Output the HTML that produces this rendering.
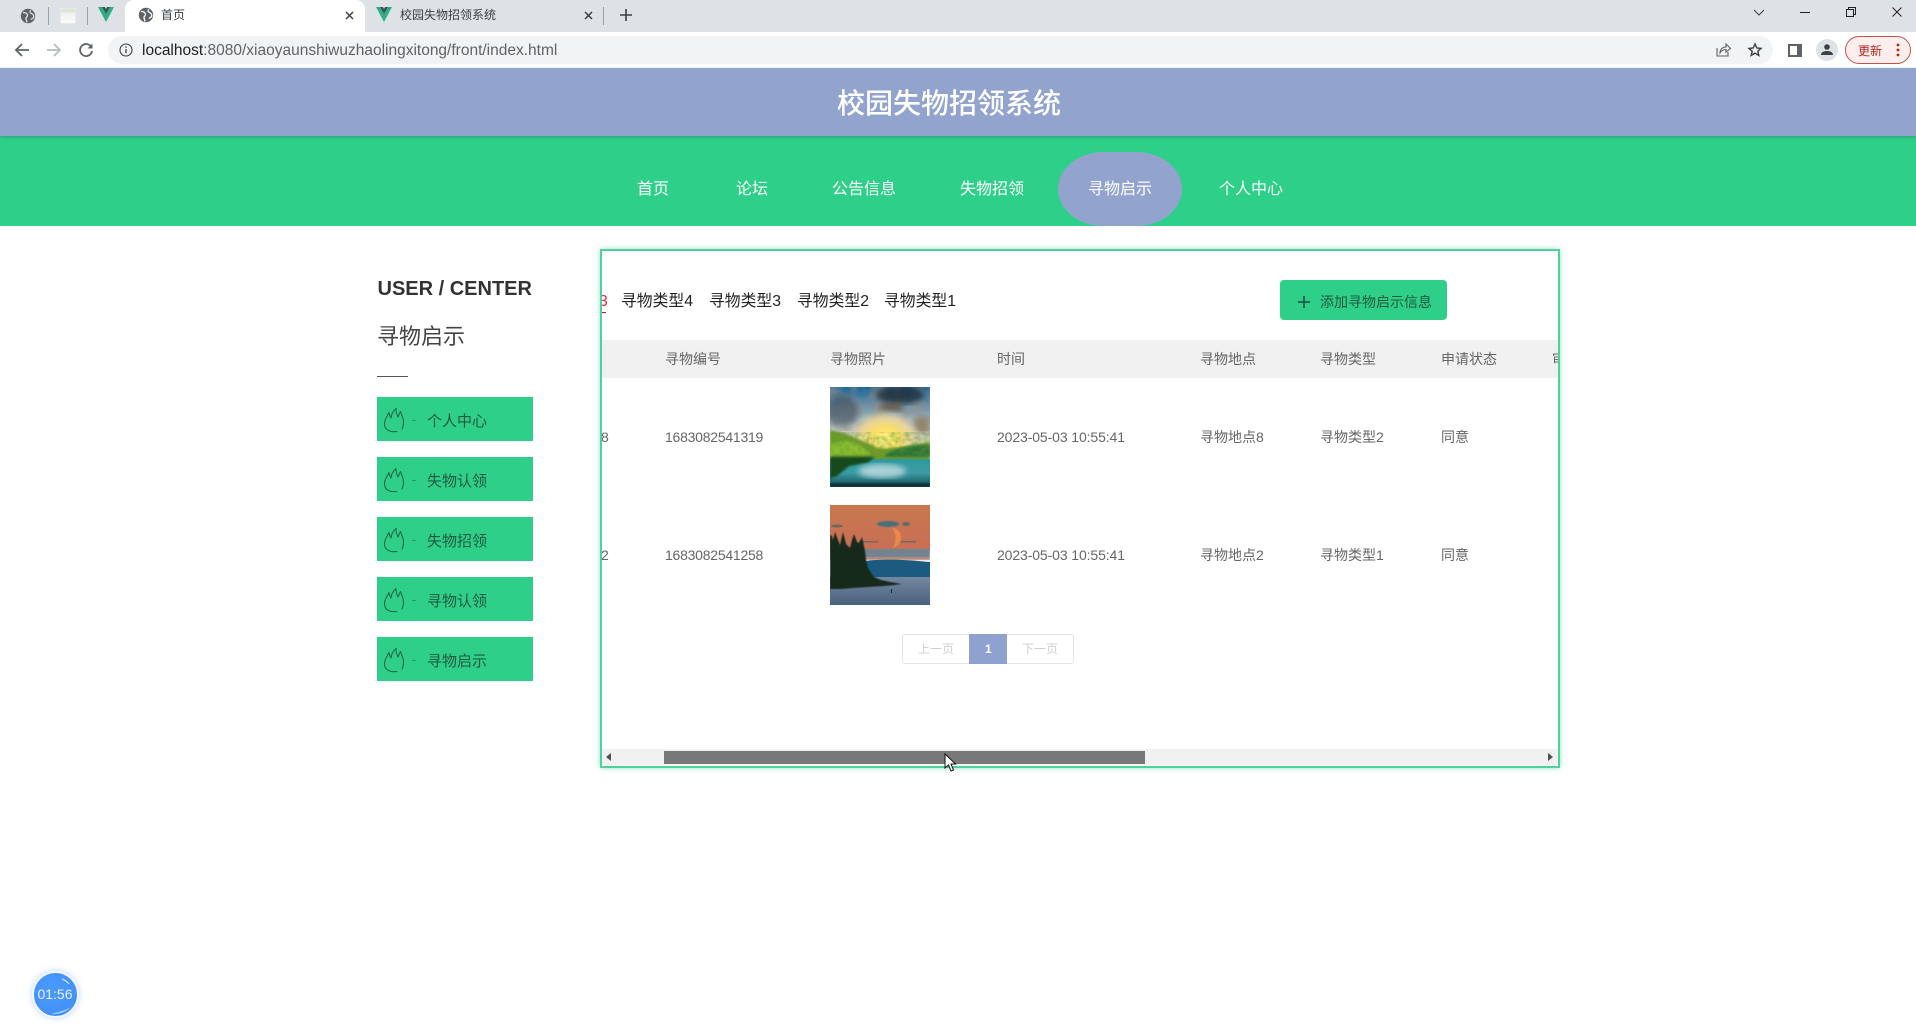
<!DOCTYPE html>
<html lang="zh"><head><meta charset="utf-8"><title>首页</title>
<style>
html,body{margin:0;padding:0;width:1916px;height:1034px;overflow:hidden;background:#fff}
body{position:relative;font-family:"Liberation Sans","Noto Sans CJK SC",sans-serif}
.a{position:absolute}
.t{position:absolute;white-space:nowrap;line-height:20px;height:20px}
svg{position:absolute;overflow:visible}
.nav{font-size:16px;color:#fff;top:180px}
.th{font-size:14px;color:#666;top:349px}
.td{font-size:14px;color:#666}
.n{letter-spacing:-.24px}
.dt{letter-spacing:-.11px}
.tab{font-size:15.8px;color:#222;top:292px}
.side{position:absolute;left:377px;width:156px;height:44px;background:#2ecf88}
.side span{position:absolute;white-space:nowrap;line-height:20px}
.side .d{left:35px;top:13px;font-size:13px;color:#2a8f60}
.side .l{left:50px;top:15px;font-size:15px;color:#1f5a40}
.side svg{left:7px;top:11px}
</style></head>
<body>
<!-- browser chrome -->
<div class="a" style="left:0;top:0;width:1916px;height:32px;background:#dee1e6"></div>
<div class="a" style="left:125px;top:0;width:240px;height:32px;background:#fff;border-radius:9px 9px 0 0"></div>
<div class="a" style="left:0;top:32px;width:1916px;height:36px;background:#fff"></div>
<div class="a" style="left:108px;top:36px;width:1665px;height:28px;background:#f1f3f4;border-radius:14px"></div>

<!-- pinned -->
<svg style="left:20px;top:8px" width="16" height="16" viewBox="0 0 16 16"><circle cx="8" cy="8" r="7.200" fill="#5f6368"/><path d="M3 4.500c2 0 4 .5 4.500 2.500S5.500 9 6 11c.3 1 .8 2 1 3.500M10.500 2.200c-.5 1.300-1 2.300.5 3s2.800 1.500 2.800 3.500-2.300 1.500-2.800 3" fill="none" stroke="#dee1e6" stroke-width="1.300"/></svg>
<div class="a" style="left:48px;top:7px;width:1px;height:18px;background:#9aa0a6"></div>
<div class="a" style="left:60px;top:8px;width:14px;height:14px;background:linear-gradient(#dbe5d8 0 25%,#eef0ee 25%,#fafafa);border:1px solid #e6e8ea"></div>
<div class="a" style="left:87px;top:7px;width:1px;height:18px;background:#9aa0a6"></div>
<svg style="left:98px;top:7px" width="16" height="15" viewBox="0 0 16 15"><path d="M0 0h4l4 7 4-7h4L8 15z" fill="#2fae82"/><path d="M4 0h3l1 2 1-2h3L8 7z" fill="#33535e"/></svg>

<!-- tab 1 -->
<svg style="left:138px;top:7px" width="16" height="16" viewBox="0 0 16 16"><circle cx="8" cy="8" r="7.200" fill="#5f6368"/><path d="M3 4.500c2 0 4 .5 4.500 2.500S5.500 9 6 11c.3 1 .8 2 1 3.500M10.500 2.200c-.5 1.300-1 2.300.5 3s2.800 1.500 2.800 3.500-2.300 1.500-2.800 3" fill="none" stroke="#fff" stroke-width="1.300"/></svg>
<div class="t" style="left:161px;top:5px;font-size:12px;color:#3c4043">首页</div>
<svg style="left:345px;top:11px" width="9" height="9" viewBox="0 0 9 9"><path d="M1 1l7 7M8 1L1 8" stroke="#3c4043" stroke-width="1.500"/></svg>
<!-- tab 2 -->
<svg style="left:376px;top:7px" width="16" height="15" viewBox="0 0 16 15"><path d="M0 0h4l4 7 4-7h4L8 15z" fill="#2fae82"/><path d="M4 0h3l1 2 1-2h3L8 7z" fill="#33535e"/></svg>
<div class="t" style="left:400px;top:5px;font-size:12px;color:#3c4043">校园失物招领系统</div>
<svg style="left:584px;top:11px" width="9" height="9" viewBox="0 0 9 9"><path d="M1 1l7 7M8 1L1 8" stroke="#3c4043" stroke-width="1.500"/></svg>
<div class="a" style="left:603px;top:7px;width:1px;height:18px;background:#9aa0a6"></div>
<svg style="left:620px;top:9px" width="12" height="12" viewBox="0 0 12 12"><path d="M6 0v12M0 6h12" stroke="#3c4043" stroke-width="1.600"/></svg>

<!-- toolbar -->
<svg style="left:14px;top:42px" width="16" height="16" viewBox="0 0 16 16"><path d="M15 8H2M8 2L2 8l6 6" fill="none" stroke="#5f6368" stroke-width="1.800"/></svg>
<svg style="left:46px;top:42px" width="16" height="16" viewBox="0 0 16 16"><path d="M1 8h13M8 2l6 6-6 6" fill="none" stroke="#b8bbbf" stroke-width="1.800"/></svg>
<svg style="left:78px;top:42px" width="16" height="16" viewBox="0 0 16 16"><path d="M13.500 5.500A6 6 0 1 0 14 9" fill="none" stroke="#5f6368" stroke-width="1.800"/><path d="M14.500 1.500v5h-5z" fill="#5f6368"/></svg>
<svg style="left:119px;top:43px" width="14" height="14" viewBox="0 0 14 14"><circle cx="7" cy="7" r="6" fill="none" stroke="#3c4043" stroke-width="1.100"/><path d="M7 6v4.200M7 3.400v1.400" stroke="#3c4043" stroke-width="1.300"/></svg>
<div class="t" style="left:142px;top:41px;font-size:15.500px;color:#5f6368"><span style="color:#202124">localhost</span>:8080/xiaoyaunshiwuzhaolingxitong/front/index.html</div>
<svg style="left:1716px;top:43px" width="15" height="14" viewBox="0 0 15 14"><path d="M1 5v8h11V9" fill="none" stroke="#5f6368" stroke-width="1.100"/><path d="M4 10c0-4 3-6 6-6V1l4.500 4.500L10 9V6.500C7.500 6.500 5.500 7.500 4 10z" fill="none" stroke="#5f6368" stroke-width="1.100"/></svg>
<svg style="left:1748px;top:43px" width="14" height="14" viewBox="0 0 14 14"><path d="M7 1l1.800 4 4.200.4-3.200 2.800 1 4.200L7 10.200 3.200 12.400l1-4.200L1 5.400 5.200 5z" fill="none" stroke="#3c4043" stroke-width="1.400"/></svg>
<div class="a" style="left:1788px;top:44px;width:14px;height:13px;background:#5f6368"></div>
<div class="a" style="left:1790px;top:46px;width:7px;height:9px;background:#fff"></div>
<div class="a" style="left:1816px;top:39px;width:22px;height:22px;border-radius:50%;background:#dee1e6"></div>
<svg style="left:1821px;top:44px" width="12" height="12" viewBox="0 0 12 12"><circle cx="6" cy="3" r="2.800" fill="#3c4043"/><path d="M0 11c0-3 3-4 6-4s6 1 6 4z" fill="#3c4043"/></svg>
<div class="a" style="left:1845px;top:36px;width:64px;height:26px;border:1px solid #c9504a;border-radius:14px;background:#fbeeed"></div>
<div class="t" style="left:1858px;top:41px;font-size:12px;color:#b3261e">更新</div>
<svg style="left:1896px;top:43px" width="4" height="14" viewBox="0 0 4 14"><circle cx="2" cy="2" r="1.400" fill="#b3261e"/><circle cx="2" cy="7" r="1.400" fill="#b3261e"/><circle cx="2" cy="12" r="1.400" fill="#b3261e"/></svg>
<!-- window controls -->
<svg style="left:1753px;top:9px" width="12" height="7" viewBox="0 0 12 7"><path d="M1 1l5 5 5-5" fill="none" stroke="#3c4043" stroke-width="1"/></svg>
<div class="a" style="left:1800px;top:12px;width:10px;height:1px;background:#202124"></div>
<svg style="left:1846px;top:7px" width="10" height="10" viewBox="0 0 10 10"><path d="M.5 2.500h7v7h-7zM2.500 2.500v-2h7v7h-2" fill="none" stroke="#202124" stroke-width="1"/></svg>
<svg style="left:1892px;top:7px" width="10" height="10" viewBox="0 0 10 10"><path d="M.5.500l9 9M9.500.500l-9 9" stroke="#202124" stroke-width="1"/></svg>

<!-- header -->
<div class="a" style="left:0;top:68px;width:1916px;height:68px;background:#92a4ce;box-shadow:0 1px 3px rgba(60,90,90,.45);z-index:2"></div>
<div class="t" style="left:837px;top:84px;height:40px;line-height:40px;font-size:28px;font-weight:500;color:#fff;z-index:3">校园失物招领系统</div>
<div class="a" style="left:0;top:136px;width:1916px;height:90px;background:#2ecf88"></div>
<div class="a" style="left:1058px;top:152px;width:124px;height:74px;background:#92a4ce;border-radius:45px/37px"></div>
<div class="t nav" style="left:637px">首页</div>
<div class="t nav" style="left:736px">论坛</div>
<div class="t nav" style="left:832px">公告信息</div>
<div class="t nav" style="left:960px">失物招领</div>
<div class="t nav" style="left:1088px">寻物启示</div>
<div class="t nav" style="left:1219px">个人中心</div>

<!-- sidebar -->
<div class="t" style="left:377.500px;top:279px;font-size:20px;font-weight:bold;color:#333">USER / CENTER</div>
<div class="t" style="left:377px;top:322px;height:30px;line-height:30px;font-size:22px;color:#444">寻物启示</div>
<div class="a" style="left:377px;top:376px;width:31px;height:1px;background:#555"></div>

<svg width="0" height="0" style="left:0;top:0"><defs><g id="fire" fill="none" stroke="#1f6a4a" stroke-width="1.100" stroke-linecap="round" stroke-linejoin="round"><path d="M13 23.500C6 24.500 .5 22 .5 15.500.5 11.500 3 9 5 4.500c.5 2.500 1 4 2 5.500C7.500 6 9 3 12 .5c-.5 3.500 1 6 2 8.500"/><path d="M14.500 8c.5-1.500 1-3 2-4.500 1 3.500 3 6.500 3 10.500 0 3-.5 5-1.500 7"/></g></defs></svg>

<div class="side" style="top:397px"><svg width="20" height="24" viewBox="0 0 20 24"><use href="#fire"/></svg><span class="d">-</span><span class="l">个人中心</span></div>
<div class="side" style="top:457px"><svg width="20" height="24" viewBox="0 0 20 24"><use href="#fire"/></svg><span class="d">-</span><span class="l">失物认领</span></div>
<div class="side" style="top:517px"><svg width="20" height="24" viewBox="0 0 20 24"><use href="#fire"/></svg><span class="d">-</span><span class="l">失物招领</span></div>
<div class="side" style="top:577px"><svg width="20" height="24" viewBox="0 0 20 24"><use href="#fire"/></svg><span class="d">-</span><span class="l">寻物认领</span></div>
<div class="side" style="top:637px"><svg width="20" height="24" viewBox="0 0 20 24"><use href="#fire"/></svg><span class="d">-</span><span class="l">寻物启示</span></div>

<!-- panel -->
<div class="a" style="left:600px;top:249px;width:956px;height:515px;border:2px solid #52cf9e;box-shadow:0 0 5px rgba(46,207,136,.55);background:#fff"></div>
<div class="a" style="left:0;top:0;width:1916px;height:1034px;clip-path:inset(251px 358px 269px 602px)">
  <div class="t" style="left:599px;top:292px;font-size:15.800px;color:#e0263c">3</div>
  <div class="a" style="left:597px;top:312px;width:9px;height:1px;background:#d9122c"></div>
  <div class="t tab" style="left:621px">寻物类型4</div>
  <div class="t tab" style="left:709px">寻物类型3</div>
  <div class="t tab" style="left:797px">寻物类型2</div>
  <div class="t tab" style="left:884px">寻物类型1</div>

  <div class="a" style="left:1280px;top:280px;width:167px;height:40px;background:#2ecf88;border-radius:4px"></div>
  <svg style="left:1298px;top:296px" width="12" height="12" viewBox="0 0 12 12"><path d="M6 0v12M0 6h12" stroke="#1f4f3b" stroke-width="1.500"/></svg>
  <div class="t" style="left:1320px;top:292px;font-size:14px;color:#1f5a40">添加寻物启示信息</div>

  <div class="a" style="left:596px;top:340px;width:970px;height:38px;background:#f1f1f1"></div>
  <div class="t th" style="left:665px">寻物编号</div>
  <div class="t th" style="left:830px">寻物照片</div>
  <div class="t th" style="left:997px">时间</div>
  <div class="t th" style="left:1200px">寻物地点</div>
  <div class="t th" style="left:1320px">寻物类型</div>
  <div class="t th" style="left:1441px">申请状态</div>
  <div class="t th" style="left:1552px">审</div>

  <div class="t td" style="left:601px;top:427px">8</div>
  <div class="t td n" style="left:665px;top:427px">1683082541319</div>
  <div class="t td dt" style="left:997px;top:427px">2023-05-03 10:55:41</div>
  <div class="t td" style="left:1200px;top:427px">寻物地点8</div>
  <div class="t td" style="left:1320px;top:427px">寻物类型2</div>
  <div class="t td" style="left:1441px;top:427px">同意</div>

  <div class="t td" style="left:601px;top:545px">2</div>
  <div class="t td n" style="left:665px;top:545px">1683082541258</div>
  <div class="t td dt" style="left:997px;top:545px">2023-05-03 10:55:41</div>
  <div class="t td" style="left:1200px;top:545px">寻物地点2</div>
  <div class="t td" style="left:1320px;top:545px">寻物类型1</div>
  <div class="t td" style="left:1441px;top:545px">同意</div>

  <!-- photo 1 -->
  <svg style="left:830px;top:387px" width="100" height="100" viewBox="0 0 100 100">
    <defs>
      <clipPath id="c1"><rect width="100" height="100"/></clipPath>
      <filter id="b3"><feGaussianBlur stdDeviation="3"/></filter>
      <filter id="b1"><feGaussianBlur stdDeviation="1"/></filter>
      <filter id="cl" x="0" y="0" width="100%" height="100%"><feTurbulence type="fractalNoise" baseFrequency=".07" numOctaves="3" seed="4"/><feColorMatrix values="0 0 0 0 .32  0 0 0 0 .27  0 0 0 0 .24  1.800 0 0 0 -.5"/></filter>
      <filter id="tx" x="0" y="0" width="100%" height="100%"><feTurbulence type="fractalNoise" baseFrequency=".2" numOctaves="2" seed="8"/><feColorMatrix values="0 0 0 0 .1  0 0 0 0 .3  0 0 0 0 .05  1.600 0 0 0 -.5"/></filter>
      <radialGradient id="sun" cx=".5" cy=".5" r=".5"><stop offset="0" stop-color="#fff585"/><stop offset=".35" stop-color="#fce063"/><stop offset=".7" stop-color="#efd89a" stop-opacity=".85"/><stop offset="1" stop-color="#d0c8ac" stop-opacity="0"/></radialGradient>
      <linearGradient id="sky1" x1="0" y1="0" x2="0" y2="1"><stop offset="0" stop-color="#1a6396"/><stop offset=".55" stop-color="#b4c4c4"/><stop offset="1" stop-color="#f0dc8c"/></linearGradient>
      <linearGradient id="lake" x1="0" y1="0" x2="0" y2="1"><stop offset="0" stop-color="#2b9aa0"/><stop offset=".5" stop-color="#3d9aa2"/><stop offset="1" stop-color="#0b4c56"/></linearGradient>
    </defs>
    <g clip-path="url(#c1)">
      <rect width="100" height="70" fill="url(#sky1)"/>
      <rect width="100" height="44" filter="url(#cl)" opacity=".75"/>
      <ellipse cx="12" cy="24" rx="16" ry="16" fill="#3a4654" opacity=".55" filter="url(#b3)"/>
      <ellipse cx="70" cy="8" rx="24" ry="9" fill="#1f2c38" opacity=".8" filter="url(#b3)"/>
      <ellipse cx="62" cy="20" rx="12" ry="5" fill="#6b5340" opacity=".8" filter="url(#b3)"/>
      <ellipse cx="92" cy="38" rx="9" ry="9" fill="#8a7656" opacity=".7" filter="url(#b3)"/>
      <ellipse cx="55" cy="52" rx="38" ry="30" fill="url(#sun)" filter="url(#b1)"/>
      <path d="M0 43c15 2 30 10 48 18 18 2 35-4 52-6v20H0z" fill="#6f9b25" filter="url(#b1)"/>
      <path d="M0 58c10-6 25-4 32 2 6 4 8 6 8 8H0z" fill="#8cbf2f" filter="url(#b1)"/>
      <path d="M55 68c10-8 30-10 45-10v12H55z" fill="#2f7434" filter="url(#b1)"/>
      <rect y="45" width="100" height="28" filter="url(#tx)" opacity=".6"/>
      <rect y="72" width="100" height="28" fill="url(#lake)"/>
      <path d="M0 70h45l-8 6-18 3-12 10-7 2z" fill="#164a1e" filter="url(#b1)"/>
      <ellipse cx="52" cy="84" rx="24" ry="7" fill="#a8d0d6" filter="url(#b3)"/>
      <rect y="96" width="100" height="4" fill="#0a3038" filter="url(#b1)"/>
    </g>
  </svg>
  <!-- photo 2 -->
  <svg style="left:830px;top:505px" width="100" height="100" viewBox="0 0 100 100">
    <defs>
      <clipPath id="c2"><rect width="100" height="100"/></clipPath>
      <filter id="s1"><feGaussianBlur stdDeviation=".6"/></filter>
      <linearGradient id="sky2" x1="0" y1="0" x2="0" y2="1"><stop offset="0" stop-color="#c8784f"/><stop offset="1" stop-color="#c86e55"/></linearGradient>
      <linearGradient id="w2" x1="0" y1="0" x2="0" y2="1"><stop offset="0" stop-color="#75889f"/><stop offset="1" stop-color="#48617e"/></linearGradient>
    </defs>
    <g clip-path="url(#c2)">
      <rect width="100" height="46" fill="url(#sky2)"/>
      <rect y="44" width="100" height="9" fill="#728391" filter="url(#s1)"/>
      <rect y="52" width="100" height="3" fill="#b98a7c" filter="url(#s1)"/>
      <path d="M35 56c15-2 35-2 65 1v15H35z" fill="#1c5a80"/>
      <rect y="72" width="100" height="28" fill="url(#w2)"/>
      <ellipse cx="58" cy="19" rx="11" ry="3" fill="#4a6f78" filter="url(#s1)"/>
      <ellipse cx="76" cy="19" rx="4" ry="2" fill="#5b6b68" filter="url(#s1)"/>
      <ellipse cx="7" cy="21" rx="6" ry="1.500" fill="#6a6a60"/>
      <rect x="30" y="36" width="18" height="1.500" fill="#7b6a5c"/>
      <rect x="68" y="36" width="18" height="1.500" fill="#76685c"/>
      <path d="M61 22c5 4 6 14 2 21 6-2 9-7 8-13-1-4-5-7-10-8z" fill="#e88a48" filter="url(#s1)"/>
      <path d="M0 30l2 1 1 4 2-8 3 8 2 5 3-13 3 12 4 4 2-8 2-6 3 8 2 1 3-6 3 14 1 9 2 8 3 5 3 4 7 3 9 2 12 2-8 1-10 1-16 1-15 1-12 1H0z" fill="#14291f" filter="url(#s1)"/>
      <rect x="61" y="84" width="1" height="4" fill="#1a2a3a"/>
    </g>
  </svg>

  <!-- pagination -->
  <div class="a" style="left:902px;top:634px;width:170px;height:28px;border:1px solid #e4e4e4;border-radius:3px"></div>
  <div class="a" style="left:969px;top:634px;width:38px;height:30px;background:#8fa2cf"></div>
  <div class="t" style="left:918px;top:639px;font-size:12px;color:#cfcfcf">上一页</div>
  <div class="t" style="left:985px;top:639px;font-size:12px;font-weight:bold;color:#fff">1</div>
  <div class="t" style="left:1022px;top:639px;font-size:12px;color:#cfcfcf">下一页</div>

  <!-- scrollbar -->
  <div class="a" style="left:602px;top:749px;width:956px;height:16px;background:#f1f1f1"></div>
  <div class="a" style="left:664px;top:751px;width:481px;height:13px;background:#787878"></div>
  <svg style="left:606px;top:753px" width="5" height="8" viewBox="0 0 5 8"><path d="M5 0v8L0 4z" fill="#505050"/></svg>
  <svg style="left:1548px;top:753px" width="5" height="8" viewBox="0 0 5 8"><path d="M0 0v8l5-4z" fill="#505050"/></svg>
</div>

<!-- cursor -->
<svg style="left:944px;top:753px;z-index:5" width="13" height="20" viewBox="0 0 13 20"><path d="M1 1v14l3.500-3 2.500 6 2.500-1-2.500-6h4.500z" fill="#fff" stroke="#111" stroke-width="1"/></svg>

<!-- timer -->
<div class="a" style="left:32px;top:971px;width:43px;height:43px;border:2px solid #f0f6ff;border-radius:50%;background:radial-gradient(circle at 40% 40%,#4a9bff,#3f8cf8);box-shadow:0 0 6px rgba(120,170,240,.5)"></div>
<svg style="left:34px;top:973px" width="43" height="43" viewBox="0 0 43 43"><path d="M28 6c3 1 5 2.500 7 5" fill="none" stroke="#cfe3ff" stroke-width="1.200"/><path d="M17 41c7 1 15-2 20-7-5 3-12 5-20 7z" fill="#a8d0ff"/></svg>
<div class="t" style="left:36px;top:984px;width:38px;text-align:center;font-size:14px;color:#e8f2ff">01:56</div>
</body></html>
